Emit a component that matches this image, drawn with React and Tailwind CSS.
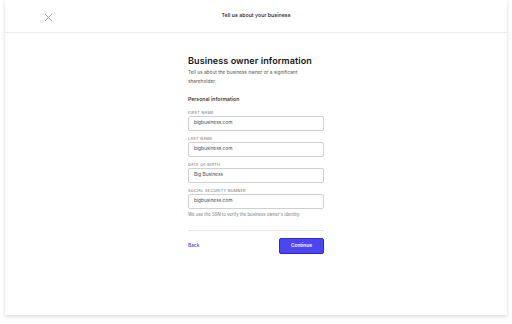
import React from 'react';

const fields = [
  { label: 'FIRST NAME', value: 'bigbusiness.com' },
  { label: 'LAST NAME', value: 'bigbusiness.com' },
  { label: 'DATE OF BIRTH', value: 'Big Business' },
  { label: 'SOCIAL SECURITY NUMBER', value: 'bigbusiness.com' },
];

function Field({ label, value }) {
  return (
    <div className="flex flex-col">
      <label className="text-[3.8px] leading-[4px] tracking-[0.3px] text-[#6b6b6b]">{label}</label>
      <div className="mt-[1px] flex h-[15px] items-center rounded-[2px] border border-[#cfcfcf] px-[5px] text-[4.8px] text-[#4a4a4a]">
        {value}
      </div>
    </div>
  );
}

export default function App() {
  return (
    <div className="h-[324px] w-[512px] bg-white font-['Inter',sans-serif]">
      <div className="mx-[5px] flex h-[315px] flex-col bg-white shadow-[0_2px_4px_rgba(0,0,0,0.12),0_0_2px_rgba(0,0,0,0.06)]">
        <div className="relative flex h-[33px] items-center justify-center border-b border-[#ececec]">
          <svg className="absolute left-[39px] top-[13px]" width="9" height="9" viewBox="0 0 9 9" fill="none" stroke="#8a8a8a" strokeWidth="0.8">
            <path d="M1 1 L8 8 M8 1 L1 8" />
          </svg>
          <span className="text-[5.3px] font-medium text-[#1a1a1a]">Tell us about your business</span>
        </div>
        <div className="mx-auto flex w-[136px] flex-col pt-[21px]">
          <h1 className="whitespace-nowrap text-[9px] font-semibold leading-[13px] tracking-[0.1px] text-[#141414]">Business owner information</h1>
          <p className="mt-[1px] text-[4.8px] leading-[9px] text-[#555]">
            Tell us about the business owner or a significant shareholder.
          </p>
          <h2 className="mt-[10px] text-[5.2px] font-medium leading-[7px] text-[#1a1a1a]">Personal information</h2>
          <div className="mt-[7.5px] flex flex-col gap-[6px]">
            {fields.map((f) => (
              <Field key={f.label} {...f} />
            ))}
          </div>
          <p className="mt-[3px] text-[4.3px] leading-[6px] text-[#777]">We use the SSN to verify the business owner's identity.</p>
          <div className="mt-[12px] border-t border-[#e6e6e6]" />
          <div className="mt-[7px] flex items-center justify-between">
            <span className="text-[4.8px] font-medium text-[#4b44f0]">Back</span>
            <button className="flex h-[16px] w-[45px] items-center justify-center rounded-[2px] border border-[#2e27c9] bg-[#4b45f2] text-[4.8px] font-semibold text-white">
              Continue
            </button>
          </div>
        </div>
      </div>
    </div>
  );
}
